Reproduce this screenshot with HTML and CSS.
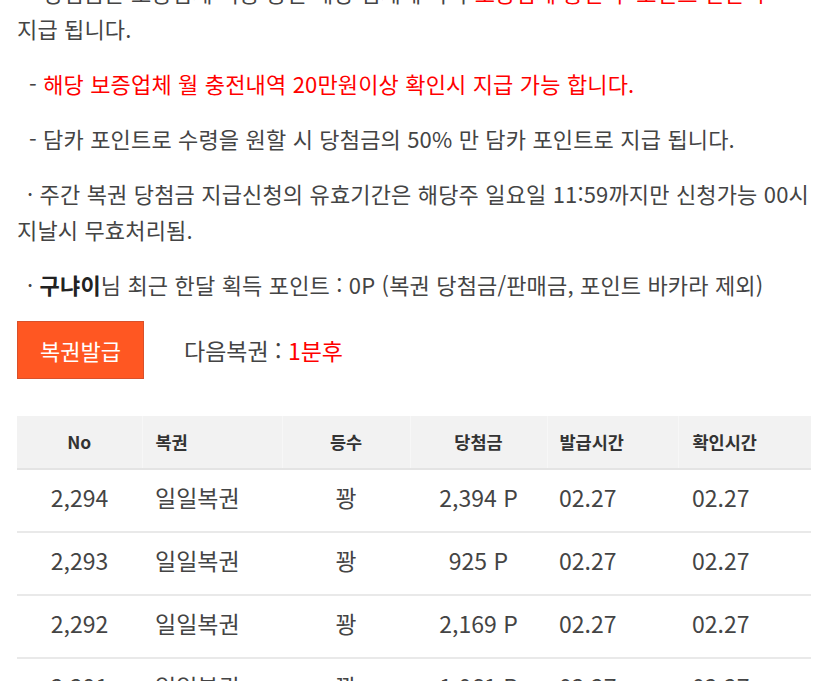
FILE: index.html
```html
<!DOCTYPE html>
<html lang="ko">
<head>
<meta charset="utf-8">
<title>복권</title>
<link rel="stylesheet" href="styles.css">
</head>
<body>
<div class="page">
  <p class="note">- 당첨금은 보증업체 이용 중인 해당 업체에 따라 <span class="red">보증업체 충전 후 포인트 전환시</span> 지급 됩니다.</p>
  <p class="note">- <span class="red">해당 보증업체 월 충전내역 20만원이상 확인시 지급 가능 합니다.</span></p>
  <p class="note">- 담카 포인트로 수령을 원할 시 당첨금의 50% 만 담카 포인트로 지급 됩니다.</p>
  <p class="note dot">· 주간 복권 당첨금 지급신청의 유효기간은 해당주 일요일 11:59까지만 신청가능 00시 지날시 무효처리됨.</p>
  <p class="note dot">· <b>구냐이</b>님 최근 한달 획득 포인트 : 0P (복권 당첨금/판매금, 포인트 바카라 제외)</p>

  <div class="issue">
    <button class="btn" type="button">복권발급</button>
    <span class="next">다음복권 : <span class="red">1분후</span></span>
  </div>

  <table class="list">
    <colgroup>
      <col class="w1"><col class="w2"><col class="w3"><col class="w4"><col class="w5"><col class="w6">
    </colgroup>
    <thead>
      <tr>
        <th class="c">No</th>
        <th class="l2">복권</th>
        <th class="c">등수</th>
        <th class="c">당첨금</th>
        <th class="l5">발급시간</th>
        <th class="l6">확인시간</th>
      </tr>
    </thead>
    <tbody>
      <tr><td class="c">2,294</td><td class="l2">일일복권</td><td class="c">꽝</td><td class="c">2,394 P</td><td class="l5">02.27</td><td class="l6">02.27</td></tr>
      <tr><td class="c">2,293</td><td class="l2">일일복권</td><td class="c">꽝</td><td class="c">925 P</td><td class="l5">02.27</td><td class="l6">02.27</td></tr>
      <tr><td class="c">2,292</td><td class="l2">일일복권</td><td class="c">꽝</td><td class="c">2,169 P</td><td class="l5">02.27</td><td class="l6">02.27</td></tr>
      <tr><td class="c">2,291</td><td class="l2">일일복권</td><td class="c">꽝</td><td class="c">1,061 P</td><td class="l5">02.27</td><td class="l6">02.27</td></tr>
    </tbody>
  </table>
</div>
</body>
</html>
```

FILE: styles.css
```css
html, body {
  margin: 0;
  padding: 0;
  background: #ffffff;
  overflow: hidden;
}

body {
  font-family: "Noto Sans CJK KR", "Noto Sans", sans-serif;
  color: #444444;
}

.page {
  margin-top: -26px;
  padding: 0 17px;
}

.note {
  margin: 0 0 19px;
  font-size: 22px;
  line-height: 36px;
  letter-spacing: 0.15px;
  text-indent: 12px;
  word-break: keep-all;
}

.note.dot {
  text-indent: 10px;
}

.note b {
  font-weight: 700;
  color: #222222;
}

.red {
  color: #ff0000;
}

.issue {
  display: flex;
  align-items: center;
  gap: 40px;
  margin-top: 19px;
}

.btn {
  width: 127px;
  height: 58px;
  background: #ff5722;
  border: 1px solid #d9502a;
  color: #ffffff;
  font-family: inherit;
  font-size: 22px;
  padding: 0;
}

.next {
  font-size: 23px;
  color: #444444;
}

.list {
  width: 794px;
  margin-top: 37px;
  border-collapse: collapse;
  table-layout: fixed;
}

.w1 { width: 125px; }
.w2 { width: 140px; }
.w3 { width: 128px; }
.w4 { width: 137px; }
.w5 { width: 131px; }
.w6 { width: 133px; }

.list th {
  height: 50px;
  background: #f2f2f2;
  border-bottom: 2px solid #e4e4e4;
  border-left: 1px solid #f7f7f7;
  font-size: 17.5px;
  font-weight: 700;
  color: #333333;
  padding: 0 0 2px;
}

.list th:first-child {
  border-left: none;
}

.list td {
  height: 54px;
  border-bottom: 2px solid #e9e9e9;
  font-size: 23px;
  color: #444444;
  padding: 0 0 7px;
}

.c { text-align: center; }
.l2 { text-align: left; padding-left: 13px !important; }
.l5 { text-align: left; padding-left: 12px !important; }
.l6 { text-align: left; padding-left: 14px !important; }
```
